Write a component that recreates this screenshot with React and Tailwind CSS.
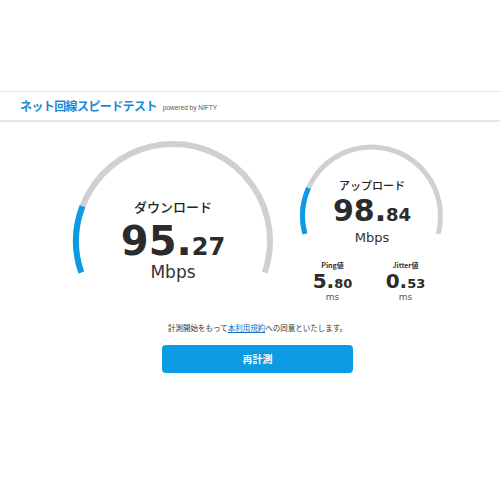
import React from "react";

const NUM_FONT = "font-['DejaVu_Sans',Verdana,sans-serif]";
const JP_FONT = "font-['Noto_Sans_CJK_JP',sans-serif]";

// point on a circle, angle in degrees, y axis pointing up
const pt = (cx, cy, r, deg) => {
  const a = (deg * Math.PI) / 180;
  return [cx + r * Math.cos(a), cy - r * Math.sin(a)];
};

// clockwise arc from `from` down to `to` (degrees)
const arc = (cx, cy, r, from, to) => {
  const [x1, y1] = pt(cx, cy, r, from);
  const [x2, y2] = pt(cx, cy, r, to);
  const large = from - to > 180 ? 1 : 0;
  return `M ${x1} ${y1} A ${r} ${r} 0 ${large} 1 ${x2} ${y2}`;
};

function Gauge({ w, h, cx, cy, r, stroke, end, fill }) {
  return (
    <svg width={w} height={h} className="absolute left-0 top-0">
      <path d={arc(cx, cy, r, 180 + end, -end)} fill="none" stroke="#d0d0d0" strokeWidth={stroke} />
      <path d={arc(cx, cy, r, 180 + end, 180 - fill)} fill="none" stroke="#0b9be2" strokeWidth={stroke} />
    </svg>
  );
}

function Value({ whole, frac, big, small }) {
  return (
    <div className={`${NUM_FONT} font-bold text-[#2b2b2b] leading-none flex items-baseline`}>
      <span className={big}>{whole}.</span>
      <span className={small}>{frac}</span>
    </div>
  );
}

export default function App() {
  return (
    <div className="w-[500px] h-[500px] bg-white pt-[91px]">
      <header className="h-[31px] border-t border-b-2 border-[#e6e6e6] flex items-center pl-[20px] gap-[6px]">
        <h1 className={`${JP_FONT} font-bold text-[12px] tracking-[-0.6px] text-[#1a8ad6]`}>ネット回線スピードテスト</h1>
        <span className="font-['Liberation_Sans',sans-serif] text-[6.5px] text-[#555] mt-[3px]">powered by NIFTY</span>
      </header>

      <main className="flex items-start pl-[70px] gap-[20px] mt-[15px]">
        <section className="relative w-[206px] h-[150px] flex flex-col items-center pt-[63px]">
          <Gauge w={206} h={150} cx={103} cy={104} r={97} stroke={6} end={19} fill={21} />
          <p className={`${JP_FONT} font-medium text-[13px] leading-none text-[#222]`}>ダウンロード</p>
          <div className="mt-[8px]">
            <Value whole="95" frac="27" big="text-[40px]" small="text-[24px]" />
          </div>
          <p className={`${NUM_FONT} text-[17px] leading-none text-[#333] mt-[3px]`}>Mbps</p>
        </section>

        <section className="mt-[4px] w-[152px] flex flex-col">
          <div className="relative w-[152px] h-[104px] flex flex-col items-center pt-[39px]">
            <Gauge w={152} h={104} cx={75.5} cy={75} r={69} stroke={5} end={15} fill={24} />
            <p className={`${JP_FONT} font-medium text-[11px] leading-none text-[#222]`}>アップロード</p>
            <div className="mt-[5px]">
              <Value whole="98" frac="84" big="text-[30px]" small="text-[18px]" />
            </div>
            <p className={`${NUM_FONT} text-[13px] leading-none text-[#333] mt-[5px]`}>Mbps</p>
          </div>

          <div className="grid grid-cols-2 w-[146px] mt-[17px]">
            {[
              ["Ping値", "5", "80"],
              ["Jitter値", "0", "53"],
            ].map(([label, whole, frac]) => (
              <div key={label} className="flex flex-col items-center">
                <p className={`${JP_FONT} font-bold text-[7px] leading-none text-[#333]`}>{label}</p>
                <div className="mt-[2px]">
                  <Value whole={whole} frac={frac} big="text-[20px]" small="text-[13px]" />
                </div>
                <p className={`${NUM_FONT} text-[9px] leading-none text-[#555] mt-[2px]`}>ms</p>
              </div>
            ))}
          </div>
        </section>
      </main>

      <div className="flex flex-col items-center pl-[15px] mt-[22px]">
        <p className={`${JP_FONT} text-[7.5px] leading-none text-[#333]`}>
          計測開始をもって<a href="#" className="text-[#1a6fc4] underline">本利用規約</a>への同意といたします。
        </p>
        <button className={`${JP_FONT} mt-[13px] w-[191px] h-[28px] rounded-[4px] bg-[#0b9be2] text-white font-bold text-[10px]`}>
          再計測
        </button>
      </div>
    </div>
  );
}
